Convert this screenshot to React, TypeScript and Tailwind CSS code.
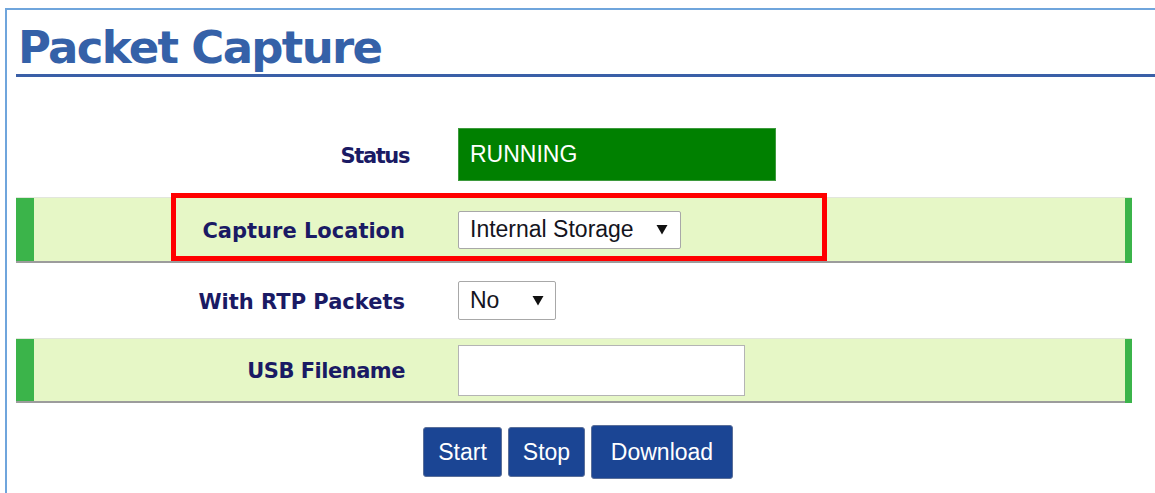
import React from "react";

const labelFont = { fontFamily: '"DejaVu Sans", Verdana, sans-serif' };
const ctrlFont = { fontFamily: '"Liberation Sans", Arial, sans-serif' };

function Caret() {
  return (
    <svg width="12" height="11" viewBox="0 0 12 11" className="shrink-0">
      <polygon points="0.5,1 11.5,1 6,10.5" fill="#111" />
    </svg>
  );
}

function Row({
  label,
  band,
  height,
  labelClass = "",
  children,
}: {
  label: string;
  band?: boolean;
  height: string;
  labelClass?: string;
  children: React.ReactNode;
}) {
  return (
    <div
      className={
        "flex w-[1116px] items-stretch " +
        height +
        (band
          ? " bg-[#e6f7c6] border-t border-t-[#e2e6dc] border-b-2 border-b-[#9c9c9c]"
          : "")
      }
    >
      <div className={"w-[18px] shrink-0 " + (band ? "bg-[#3bb44a]" : "")} />
      <div className="flex flex-1 items-center">
        <div
          className={
            "relative top-[2px] w-[371px] shrink-0 text-right font-bold text-[21px] text-[#1a1a64] " +
            labelClass
          }
          style={labelFont}
        >
          {label}
        </div>
        <div className="ml-[53px] flex items-center">{children}</div>
      </div>
      <div className={"w-[7px] shrink-0 " + (band ? "bg-[#3bb44a] -mb-[2px]" : "")} />
    </div>
  );
}

function Button({ text, width, tall }: { text: string; width: string; tall?: boolean }) {
  return (
    <button
      className={
        "flex items-center justify-center rounded-[3px] border border-[#5a6f99] bg-[#1b4594] text-[23px] text-white " +
        width +
        (tall ? " h-[54px]" : " h-[50px]")
      }
      style={ctrlFont}
    >
      {text}
    </button>
  );
}

export default function App() {
  return (
    <div className="relative h-[493px] w-[1155px] overflow-hidden bg-white">
      <div className="ml-[5px] mt-[8px] w-[1200px] border-l-2 border-t-2 border-[#6fa5dc] pb-[40px]">
        <div className="pl-[9px]">
          <h1
            className="mt-[11px] h-[56px] border-b-[3px] border-[#3a5fa7] pl-[2px] text-[45px] font-bold leading-[53px] tracking-[-1.7px] text-[#3561a8]"
            style={labelFont}
          >
            Packet Capture
          </h1>

          <div className="mt-[51px]">
            <Row label="Status" height="h-[53px]" labelClass="tracking-[-1.4px] left-[4px]">
              <div
                className="flex h-[53px] w-[318px] items-center border border-[#3d9a3d] bg-[#008000] pl-[11px] text-[23px] text-white"
                style={ctrlFont}
              >
                RUNNING
              </div>
            </Row>
          </div>

          <div className="mt-[16px]">
            <Row label="Capture Location" band height="h-[66px]">
              <div
                className="flex h-[38px] w-[223px] items-center justify-between rounded-[2px] border border-[#a8a8a8] bg-white pl-[11px] pr-[12px] text-[23px] text-[#141420]"
                style={ctrlFont}
              >
                <span>Internal Storage</span>
                <Caret />
              </div>
            </Row>
          </div>

          <div className="mt-[18px]">
            <Row label="With RTP Packets" height="h-[39px]">
              <div
                className="flex h-[39px] w-[98px] items-center justify-between rounded-[2px] border border-[#a8a8a8] bg-white pl-[11px] pr-[11px] text-[23px] text-[#141420]"
                style={ctrlFont}
              >
                <span>No</span>
                <Caret />
              </div>
            </Row>
          </div>

          <div className="mt-[18px]">
            <Row label="USB Filename" band height="h-[65px]" labelClass="tracking-[-0.5px]">
              <div className="h-[51px] w-[287px] border border-[#b4b4b4] bg-white" />
            </Row>
          </div>

          <div className="mt-[22px] flex w-[1116px] items-center justify-center gap-[6px] pl-[8px]">
            <Button text="Start" width="w-[79px]" />
            <Button text="Stop" width="w-[77px]" />
            <Button text="Download" width="w-[142px]" tall />
          </div>
        </div>
      </div>

      {/* highlight frame around the capture location setting */}
      <div className="pointer-events-none absolute left-[171px] top-[193px] h-[68px] w-[656px] border-[5px] border-[#ff0000]" />
    </div>
  );
}
